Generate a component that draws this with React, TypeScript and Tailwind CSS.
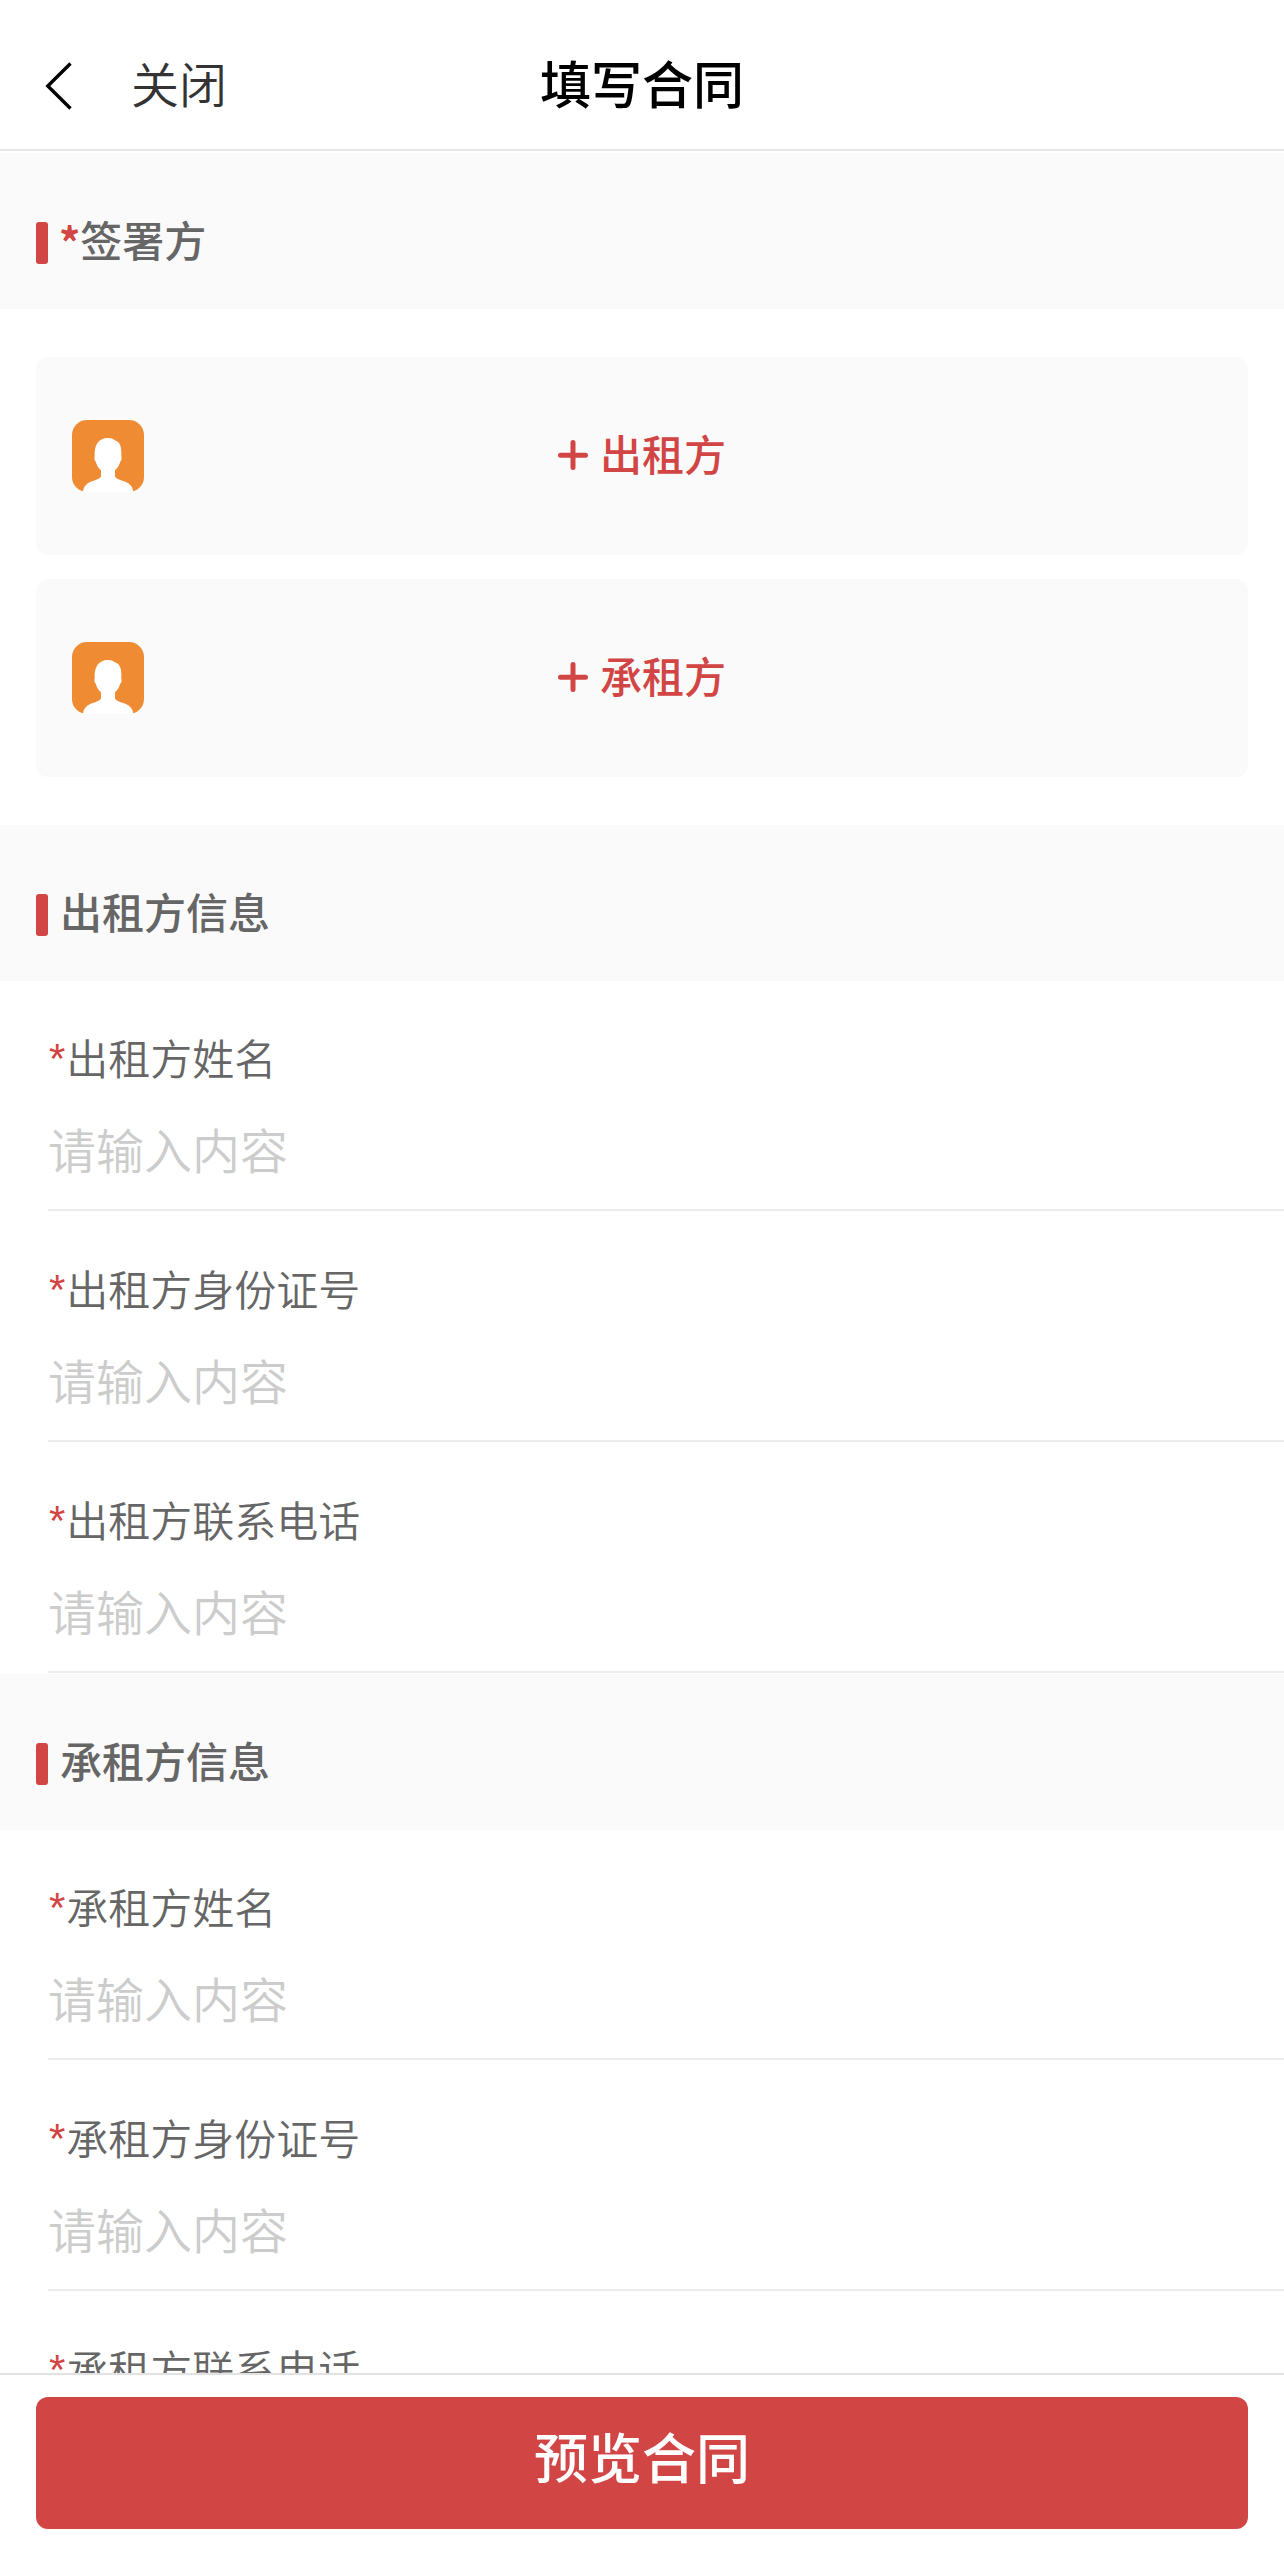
interface Party {
  id: string;
  name: string;
}

interface FieldProps {
  label: string;
}

interface SectionTitleProps {
  title: string;
  required?: boolean;
}

const parties: Party[] = [
  { id: "lessor", name: "出租方" },
  { id: "lessee", name: "承租方" },
];

const fieldNames = ["姓名", "身份证号", "联系电话"];

const BackIcon = () => (
  <svg
    className="h-12 w-7 shrink-0"
    viewBox="0 0 28 48"
    fill="none"
    stroke="#000"
    strokeWidth="3.4"
  >
    <path d="M26.500 1.500 3.800 24l22.700 22.500" />
  </svg>
);

const PlusIcon = () => (
  <svg
    className="size-[30px] shrink-0"
    viewBox="0 0 30 30"
    fill="none"
    stroke="currentColor"
    strokeWidth="5"
    strokeLinecap="round"
  >
    <path d="M15 2.500v25M2.500 15.300h25" />
  </svg>
);

const AvatarIcon = () => (
  <svg className="size-[72px] shrink-0" viewBox="0 0 72 72">
    <rect width="72" height="72" rx="15" fill="#ee8b33" />
    <path
      fill="#fff"
      d="M11 72c.4-6 4.200-9.300 10.500-11.300 5-1.500 7.500-2.700 7.500-5.200v-5.300c-2.700-2.200-4.400-5-5.200-8.400-1.200-1-1.900-3.500-1.100-5.300-.8-10.500 3.300-18.500 13.300-18.500 3 0 5 .8 6.800 2.300 5.200 1.200 7.100 7 6.500 16.200.8 1.800.1 4.300-1.100 5.300-.8 3.400-2.700 6.200-5.200 8.400v5.300c0 2.500 2.500 3.700 7.500 5.200 6.500 2 10.400 5.300 10.800 11.300z"
    />
  </svg>
);

const SectionTitle = ({ title, required }: SectionTitleProps) => (
  <div className="flex h-[156px] shrink-0 items-start bg-[#fafafa] px-9 pt-[69px]">
    <span className="h-[42px] w-3 rounded-[3px] bg-[#d24545]" />
    <h2 className="-mt-1 ml-3 text-[42px] leading-[42px] font-medium text-[#666]">
      {required && (
        <span className="relative top-0.5 -ml-px font-bold text-[#d24545]">
          *
        </span>
      )}
      {title}
    </h2>
  </div>
);

const PartyCard = ({ name }: { name: string }) => (
  <div className="grid h-[198px] grid-cols-[1fr_auto_1fr] items-center rounded-xl bg-[#fafafa] px-9">
    <AvatarIcon />
    <button className="flex items-center gap-3 pb-0.5 text-[42px] leading-[42px] font-medium text-[#d24545]">
      <PlusIcon />
      <span className="pb-1">{name}</span>
    </button>
  </div>
);

const Field = ({ label }: FieldProps) => (
  <div className="h-[231px] shrink-0 pl-12">
    <div className="flex h-[230px] flex-col border-b-2 border-[#ececec] pt-[46px]">
      <label className="text-[42px] leading-[60px] font-[350] text-[#666]">
        <span className="relative -top-0.5 mx-px font-['Liberation_Sans'] font-normal text-[#d24545]">
          *
        </span>
        {label}
      </label>
      <input
        className="mt-[21px] h-[72px] w-full text-[48px] leading-[72px] font-[350] outline-none placeholder:text-[#ccc]"
        placeholder="请输入内容"
      />
    </div>
  </div>
);

const App = () => {
  return (
    <div className="flex h-[2552px] w-full flex-col overflow-hidden bg-white font-['Noto_Sans_CJK_SC',sans-serif]">
      <header className="mb-0.5 grid h-[151px] shrink-0 grid-cols-[1fr_auto_1fr] items-center border-b-2 border-[#e5e5e5] px-11 pt-[22px]">
        <div className="flex items-center gap-[59px]">
          <BackIcon />
          <span className="pb-2 text-[48px] leading-[48px] font-[350] text-[#333]">
            关闭
          </span>
        </div>
        <h1 className="pb-1.5 text-[51px] leading-[51px] font-medium text-black">
          填写合同
        </h1>
      </header>

      <main className="flex min-h-0 flex-1 flex-col overflow-hidden">
        <SectionTitle title="签署方" required />
        <div className="flex shrink-0 flex-col gap-6 px-9 py-12">
          {parties.map(({ id, name }) => (
            <PartyCard key={id} name={name} />
          ))}
        </div>

        {parties.map(({ id, name }) => (
          <section key={id} className="shrink-0">
            <SectionTitle title={`${name}信息`} />
            {fieldNames.map((field) => (
              <Field key={field} label={`${name}${field}`} />
            ))}
          </section>
        ))}
      </main>

      <footer className="h-[179px] shrink-0 border-t-2 border-[#e2e2e2] bg-white px-9 pt-[22px]">
        <button className="h-[132px] w-full rounded-xl bg-[#d24545] pb-3.5 text-[54px] leading-[54px] font-medium text-white">
          预览合同
        </button>
      </footer>
    </div>
  );
};

export default App;
